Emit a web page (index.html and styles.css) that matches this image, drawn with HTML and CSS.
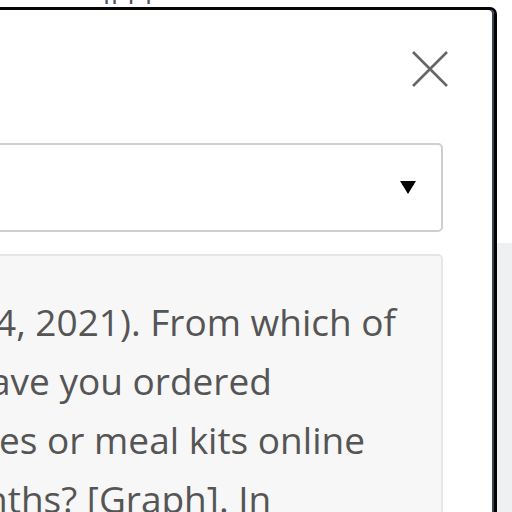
FILE: index.html
```html
<!DOCTYPE html>
<html lang="en">
<head>
<meta charset="utf-8">
<title>Citation</title>
<link rel="stylesheet" href="styles.css">
</head>
<body>
<div class="page">
  <div class="page-top"><span class="peek">ll&nbsp;l</span><span class="peek peek2">l</span></div>
  <div class="page-band"></div>
</div>
<div class="modal">
  <div class="modal-head">
    <button class="close" aria-label="Close">
      <svg width="36" height="36" viewBox="0 0 36 36"><path d="M1 1 L35 35 M35 1 L1 35" stroke="#666" stroke-width="2.6" fill="none"/></svg>
    </button>
  </div>
  <div class="select">
    <span class="select-value">APA</span>
    <svg class="arrow" width="16" height="13" viewBox="0 0 16 13"><path d="M0 0 H16 L8 13 Z" fill="#000"/></svg>
  </div>
  <div class="cite">
    <div class="line l1">4, 2021). From which of</div>
    <div class="line l2">ave you ordered</div>
    <div class="line l3">ges or meal kits online</div>
    <div class="line l4">nths? [Graph]. In</div>
  </div>
</div>
</body>
</html>
```

FILE: styles.css
```css
html, body {
  margin: 0;
  padding: 0;
  width: 512px;
  height: 512px;
  overflow: hidden;
  background: #fff;
  font-family: "Open Sans", "Liberation Sans", sans-serif;
}
.page {
  display: flex;
  flex-direction: column;
  height: 512px;
}
.page-top {
  height: 243px;
  background: #fff;
  position: relative;
}
.peek {
  position: absolute;
  top: -26px;
  left: 103px;
  font-size: 28px;
  color: #4a5568;
  letter-spacing: 1px;
}
.peek2 { left: 145px; }
.page-band {
  flex: 1;
  background: linear-gradient(90deg, #f7f8f9 0, #eef0f2 12px);
}
.modal {
  position: absolute;
  top: 7px;
  left: -303px;
  width: 800px;
  height: 560px;
  box-sizing: border-box;
  background: #fff;
  border: 3px solid #050505;
  border-radius: 7px;
  box-shadow: inset -2px 0 0 #3a4553;
  padding: 0 51px 0 100px;
}
.modal-head {
  height: 133px;
  box-sizing: border-box;
  padding-top: 41px;
  display: flex;
  justify-content: flex-end;
  margin-right: -5px;
}
.close {
  border: 0;
  background: none;
  padding: 0;
  width: 36px;
  height: 36px;
  display: block;
}
.close svg { display: block; }
.select {
  height: 89px;
  box-sizing: border-box;
  border: 2px solid #cfcfcf;
  border-radius: 5px;
  display: flex;
  align-items: center;
  justify-content: space-between;
  padding: 0 25px 0 20px;
  margin-bottom: 22px;
}
.select-value {
  font-size: 37px;
  color: #555;
}
.arrow { display: block; }
.cite {
  border: 2px solid #e6e6e6;
  border-radius: 5px;
  background: #f7f7f7;
  padding: 36px 0 0 0;
  height: 300px;
  overflow: hidden;
  color: #555;
  font-size: 37px;
  line-height: 59px;
}
.line { white-space: nowrap; }
.l1 { text-indent: 193px; }
.l2 { text-indent: 188px; }
.l3 { text-indent: 177px; }
.l4 { text-indent: 183px; }
```
